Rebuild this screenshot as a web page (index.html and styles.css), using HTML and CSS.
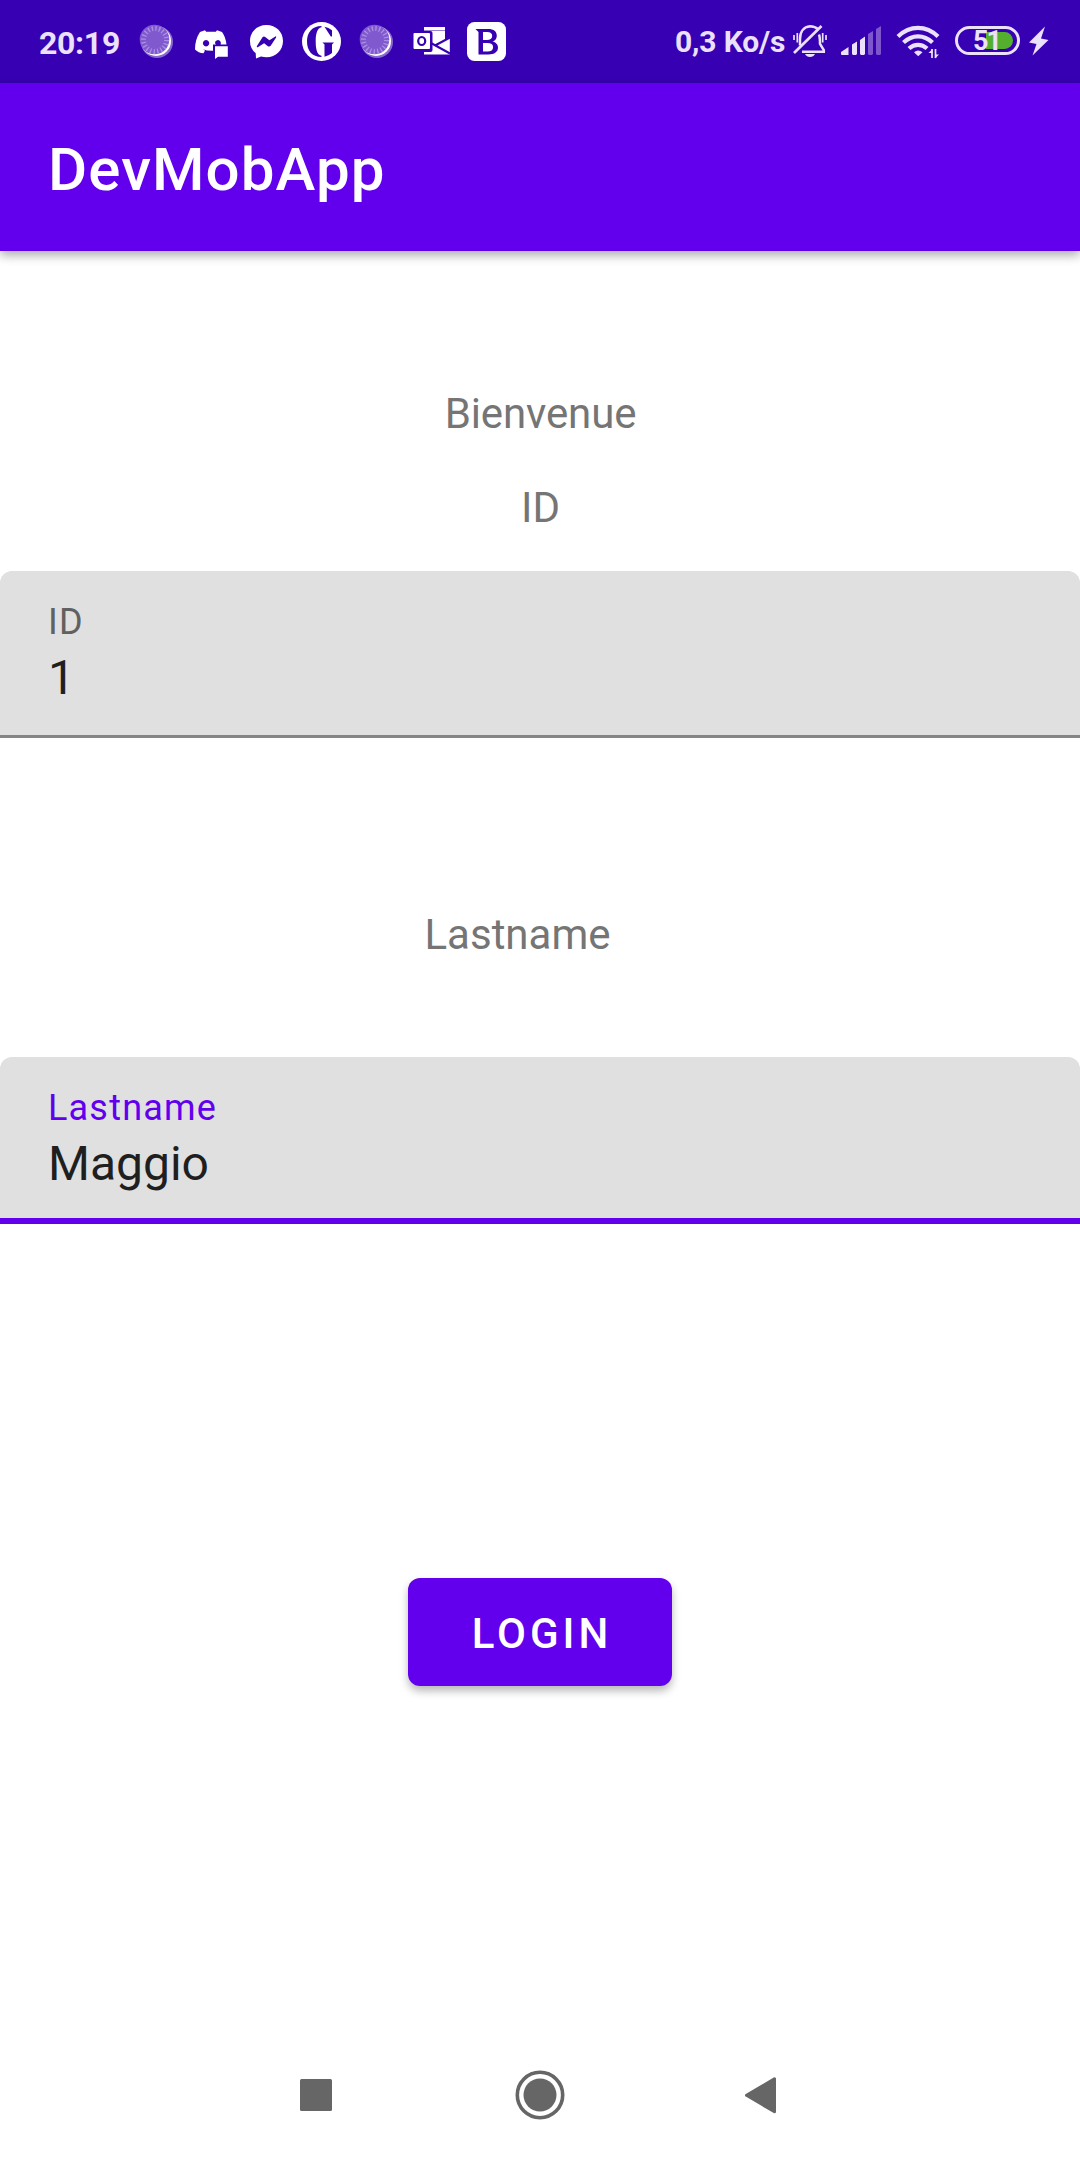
FILE: index.html
```html
<!DOCTYPE html>
<html lang="fr">
<head>
<meta charset="utf-8">
<title>DevMobApp</title>
<link rel="stylesheet" href="styles.css">
</head>
<body>
<header class="status">
  <span class="clock">20:19</span>
  <div class="notifications">
    <svg width="55" height="83" viewBox="129 0 55 83">
      <g id="moon">
        <circle cx="157" cy="42" r="16" fill="#8a68d2"/>
        <circle cx="156" cy="41" r="15" fill="#fff"/>
        <circle cx="154.5" cy="39.5" r="14.8" fill="#8059ce"/>
        <circle cx="155" cy="40" r="11.5" fill="none" stroke="#ab90e2" stroke-width="5" stroke-dasharray="1.3 2.313"/>
      </g>
    </svg>
    <svg width="55" height="83" viewBox="184 0 55 83">
      <path fill="#fff" fill-rule="evenodd" d="M205 30.3 200 32C196.500 37 195 43 195 49.500 197.500 52 200 53 203.500 53.200L205 50.500 203 49.300Q207 51 213 50.800V44.500H226.500Q225.500 36.500 222 32L217 30.300 215.800 31.800H206.200ZM206 40a3.200 3.200 0 1 0 .1 0ZM218 40q-3 .5-3 3.200l1 1.300h4.700q.8-4-2.700-4.500Z"/>
      <path fill="#fff" d="M215 46.300H227.800V56.700H218L215 59Z"/>
    </svg>
    <svg width="55" height="83" viewBox="239 0 55 83">
      <path fill="#fff" d="M266.500 25C257 25 250 31.700 250 41q0 7.500 5.700 12.200l.3 5.300 5-2.100q3 .8 5.500.8C276 57.200 283 50.200 283 41S276 25 266.500 25Z"/>
      <path fill="#3700b3" d="m256.800 46.300 5.700-9q1.200-1.300 2.700-.3l4.200 3.200 6-3.800q1.200-.2.700 1l-5.400 8.400q-1.300 1.400-2.800.4l-3.800-3-6.300 4Q256.500 47.500 256.800 46.300Z"/>
    </svg>
    <svg width="55" height="83" viewBox="294 0 55 83">
      <circle cx="321.500" cy="41.500" r="19.500" fill="#fff"/>
      <path fill="#3700b3" d="M321.500 26C312 26 307 32.500 307 41.500S312 57 321.500 57v-1.200C317 55 315.700 49 315.700 41.500S317 28 321.500 27.200ZM324.500 26.700q4 .8 7.500 3.500v6.300h-1.200ZM322.500 42.500H334l-2 2V53q-3.500 3-7.500 3.700V44.500Z"/>
    </svg>
    <svg width="55" height="83" viewBox="349 0 55 83"><use href="#moon" x="220"/></svg>
    <svg width="55" height="83" viewBox="404 0 55 83">
      <path fill="#fff" d="M424 27h22v9.500l3.800 2V54.500H424Z"/>
      <path d="M424 30.500h22" stroke="#9a80d9" stroke-width="1"/>
      <path d="M430 42.500 450 53.500M435 45.500 450 37.500M446 27v11h4" fill="none" stroke="#3700b3" stroke-width="2"/>
      <rect x="412" y="31" width="20.500" height="21" rx="2" fill="#3700b3"/>
      <rect x="413.500" y="33" width="16.500" height="16" rx="1" fill="#fff"/>
      <ellipse cx="421.700" cy="41" rx="3.500" ry="4" fill="none" stroke="#3700b3" stroke-width="2.200"/>
    </svg>
    <svg width="55" height="83" viewBox="459 0 55 83">
      <rect x="467" y="22" width="39" height="39" rx="7.500" fill="#fff"/>
      <path fill="#3700b3" fill-rule="evenodd" d="M475.500 29H488c6 0 8.800 2.700 8.800 6.700 0 3-1.700 5-4.300 5.700 3.400.6 5.500 3 5.500 6.200 0 4.400-3.500 6.900-9.500 6.900H478.500V32ZM483 32V40h3.700c3.500 0 5.500-1.300 5.500-4s-1.700-4-5-4ZM483 43v8.500h4.500c3.700 0 5.600-1.500 5.600-4.300s-2-4.200-5.800-4.200Z"/>
    </svg>
  </div>
  <div class="system">
    <span class="rate">0,3 Ko/s</span>
    <svg class="bell" width="36" height="83" viewBox="792 0 36 83" fill="none" stroke="#ebe1fa" stroke-width="2">
      <path d="M800 45.500V39C800 31.500 804 27 810 26.300Q815 26.300 818.500 29.500M819 34.500Q820 37 820 44L823.800 50V51.800H802" stroke-width="2.500"/>
      <path d="M794 53 821.500 26" stroke-width="2.700"/>
      <path d="M805 54H815Q813.500 57 810 57T805 54Z" fill="#ebe1fa" stroke="none"/>
      <path d="M794 35V40M797.300 33V42.500M822.700 33V42.500M826 35V40" stroke-width="1.700"/>
    </svg>
    <svg class="signal" width="41" height="83" viewBox="841 0 41 83" fill="#ebe1fa">
      <path d="M841 52 848.500 47V55H842Q841 55 841 54ZM852 44.500 857 41.500V54L856 55H853L852 54ZM860 40 865 36.500V54L864 55H861L860 54Z"/>
      <path fill="#7d55cc" d="M868 34 873 31V54L872 55H869L868 54ZM876 29 881 26V54L880 55H877L876 54Z"/>
    </svg>
    <svg class="wifi" width="44" height="83" viewBox="896 0 44 83" fill="none" stroke="#ebe1fa" stroke-width="4.200">
      <path d="M898 36.500Q907 27.900 918 27.900T938 36.500M903.500 42.500Q910 36.300 918 36.300T932.500 42.500M909 48.500Q913 44.800 918 44.800T927 48.500"/>
      <path fill="#ebe1fa" stroke="none" d="M914 52.200Q918 48.600 922.500 52.200L918.200 56.300Z"/>
      <path d="M932 49V58M935.500 49V58" stroke-width="1.700"/>
      <path d="M932.500 49V53H928.500ZM935 58.500V54.500H939Z" fill="#ebe1fa" stroke="none"/>
    </svg>
    <div class="battery"><span>51</span></div>
    <svg class="bolt" width="20" height="83" viewBox="1029 0 20 83"><path fill="#ebe1fa" d="M1045 26.500 1029 42.500 1036.500 44 1032.500 55.500 1048.500 40 1041 38.500Z"/></svg>
  </div>
</header>
<div class="appbar"><h1>DevMobApp</h1></div>
<main class="content">
  <p class="caption welcome">Bienvenue</p>
  <p class="caption id-title">ID</p>
  <div class="field">
    <label class="label">ID</label>
    <div class="value">1</div>
  </div>
  <p class="caption name-title">Lastname</p>
  <div class="field focused">
    <label class="label">Lastname</label>
    <div class="value">Maggio</div>
  </div>
  <button class="login">LOGIN</button>
</main>
<nav class="navbar">
  <svg width="32" height="50" viewBox="300 2070 32 50"><rect x="300" y="2079" width="32" height="32" rx="1.500" fill="#666"/></svg>
  <svg class="home" width="50" height="50" viewBox="515.500 2070.500 50 50"><circle cx="540.500" cy="2095.500" r="22.700" fill="none" stroke="#666" stroke-width="3.600"/><circle cx="540.500" cy="2095.500" r="16.500" fill="#666"/></svg>
  <svg width="32" height="50" viewBox="744 2070 32 50"><path fill="#666" stroke="#666" stroke-width="3" stroke-linejoin="round" d="M746.500 2095.300 774.500 2078.800V2111.800Z"/></svg>
</nav>
</body>
</html>
```
FILE: styles.css
```css
* { box-sizing: border-box; }
body {
  margin: 0;
  width: 1080px;
  height: 2160px;
  display: flex;
  flex-direction: column;
  background: #fff;
  font-family: Roboto, sans-serif;
  overflow: hidden;
}
svg { display: block; flex: none; }
h1, p { margin: 0; }

.status {
  height: 83px;
  flex: none;
  display: flex;
  background: #3700b3;
  color: #ebe1fa;
  font-weight: 700;
  white-space: nowrap;
}
.clock {
  width: 90px;
  margin-left: 39px;
  font-size: 32px;
  line-height: 86px;
  letter-spacing: -.300px;
}
.notifications { display: flex; }
.system { display: flex; margin-left: auto; padding-right: 31px; }
.rate {
  width: 117px;
  font-size: 30px;
  line-height: 84px;
  letter-spacing: -.150px;
}
.signal { margin-left: 13px; }
.wifi { margin-left: 14px; }
.bolt { margin-left: 9px; }
.battery {
  width: 65px;
  height: 29px;
  margin: 26px 0 0 15px;
  border: 3px solid #ebe1fa;
  border-radius: 15px;
  padding: 3px 4px;
  display: flex;
}
.battery span {
  flex: 1;
  padding-left: 11px;
  border-radius: 0 9px 9px 0;
  background: linear-gradient(90deg, #3700b3 24px, #54b02c 24px);
  font-size: 27px;
  line-height: 18px;
  letter-spacing: -2px;
}

.appbar {
  height: 168px;
  flex: none;
  padding-left: 48px;
  background: #6200ee;
  color: #fff;
  box-shadow: 0 4px 10px rgba(0, 0, 0, .34);
}
.appbar h1 {
  font-size: 60px;
  font-weight: 500;
  line-height: 173px;
  letter-spacing: 1.100px;
}

.content {
  flex: 1;
  display: flex;
  flex-direction: column;
}
.caption {
  align-self: center;
  height: 50px;
  font-size: 42px;
  line-height: 50px;
  color: #757575;
}
.welcome { margin-top: 138px; padding-left: 1px; letter-spacing: -.120px; }
.id-title { margin: 44px 0 38px; padding-left: 1px; }
.name-title { margin: 172px 0 97px; padding-right: 45px; }

.field {
  height: 167px;
  padding: 29px 48px 0;
  border-bottom: 3px solid #858585;
  border-radius: 12px 12px 0 0;
  background: #e0e0e0;
}
.label {
  display: block;
  font-size: 36px;
  line-height: 44px;
  letter-spacing: 1.200px;
  color: #616161;
}
.value {
  margin-top: 5px;
  font-size: 48px;
  line-height: 58px;
  color: #1f1f1f;
}
.focused { border-bottom: 6px solid #6200ee; }
.focused .label { color: #6200ee; }

.login {
  width: 264px;
  height: 108px;
  margin-top: 354px;
  align-self: center;
  padding: 4px 0 0 4px;
  border: 0;
  border-radius: 12px;
  background: #6200ee;
  color: #fff;
  font: 500 42px/50px Roboto, sans-serif;
  letter-spacing: 4px;
  box-shadow: 0 5px 8px rgba(0, 0, 0, .28);
}

.navbar {
  height: 130px;
  flex: none;
  padding: 0 304px 0 300px;
  display: flex;
  align-items: center;
  justify-content: space-between;
}
.home { margin-left: 4px; }
```
